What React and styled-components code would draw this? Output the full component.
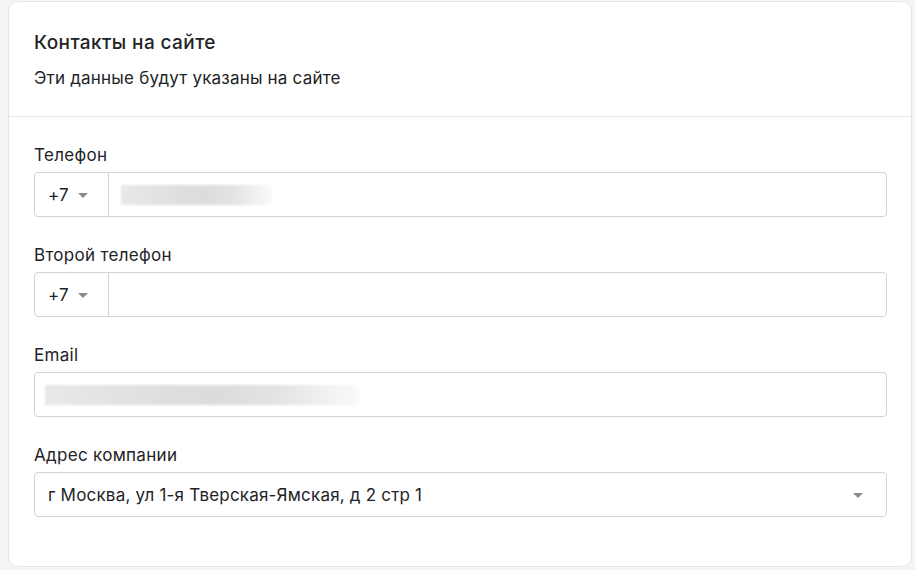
import React from "react";
import styled, { createGlobalStyle } from "styled-components";

const Global = createGlobalStyle`
  html, body { margin: 0; padding: 0; background: #f4f4f6; }
  body { font-family: Inter, "Noto Sans", sans-serif; color: #222326; }
`;

const Page = styled.div`
  padding: 1px 3px 0 8px;
  width: 915px;
  height: 570px;
  box-sizing: border-box;
`;

const Card = styled.section`
  background: #fff;
  border: 1px solid #e6e6ea;
  border-radius: 10px;
  height: 566px;
  box-sizing: border-box;
`;

const Header = styled.header`
  padding: 29px 25px 0;
  height: 115px;
  box-sizing: border-box;
  border-bottom: 1px solid #e6e6ea;
`;

const Title = styled.h2`
  margin: 0;
  font-size: 19px;
  letter-spacing: 0.4px;
  font-weight: 500;
  line-height: 24px;
`;

const Subtitle = styled.p`
  margin: 11px 0 0;
  font-size: 17px;
  letter-spacing: 0.2px;
  line-height: 24px;
`;

const Body = styled.div`
  padding: 27px 24px 0 25px;
  display: flex;
  flex-direction: column;
  gap: 27px;
`;

const Field = styled.div`
  display: flex;
  flex-direction: column;
  gap: 6px;
`;

const Label = styled.label`
  font-size: 17px;
  letter-spacing: 0.3px;
  line-height: 22px;
`;

const Box = styled.div`
  display: flex;
  align-items: center;
  height: 45px;
  box-sizing: border-box;
  border: 1px solid #d3d3d6;
  border-radius: 4px;
  font-size: 17px;
  letter-spacing: 0.2px;
`;

const Prefix = styled.div`
  display: flex;
  align-items: center;
  gap: 9px;
  width: 74px;
  height: 100%;
  box-sizing: border-box;
  padding-left: 13px;
  border-right: 1px solid #d3d3d6;
`;

const Caret = styled.span`
  display: inline-block;
  width: 0;
  height: 0;
  border-left: 5px solid transparent;
  border-right: 5px solid transparent;
  border-top: 5px solid #8a8a8e;
  margin-top: 2px;
`;

const Value = styled.div`
  flex: 1;
  padding-left: 13px;
`;

const Blur = styled.div`
  margin-left: ${(p) => p.$left}px;
  width: ${(p) => p.$w}px;
  height: 20px;
  background: linear-gradient(90deg, #e9e9e9 0%, #dedede 40%, #dcdcdc 55%, #e4e4e4 75%, #fafafa 100%);
  filter: blur(1px);
`;

const EndCaret = styled(Caret)`
  margin-right: 23px;
`;

export default function App() {
  return (
    <>
      <Global />
      <Page>
        <Card>
          <Header>
            <Title>Контакты на сайте</Title>
            <Subtitle>Эти данные будут указаны на сайте</Subtitle>
          </Header>
          <Body>
            <Field>
              <Label>Телефон</Label>
              <Box>
                <Prefix>+7 <Caret /></Prefix>
                <Blur $left={12} $w={151} />
              </Box>
            </Field>
            <Field>
              <Label>Второй телефон</Label>
              <Box>
                <Prefix>+7 <Caret /></Prefix>
              </Box>
            </Field>
            <Field>
              <Label>Email</Label>
              <Box>
                <Blur $left={10} $w={314} />
              </Box>
            </Field>
            <Field>
              <Label>Адрес компании</Label>
              <Box>
                <Value>г Москва, ул 1-я Тверская-Ямская, д 2 стр 1</Value>
                <EndCaret />
              </Box>
            </Field>
          </Body>
        </Card>
      </Page>
    </>
  );
}
